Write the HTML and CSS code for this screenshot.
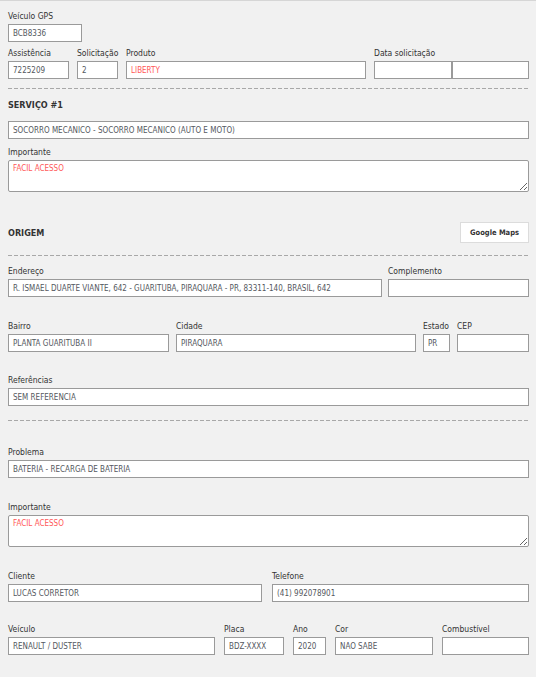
FILE: index.html
```html
<!DOCTYPE html>
<html lang="pt">
<head>
<meta charset="utf-8">
<title>Serviço</title>
<link rel="stylesheet" href="styles.css">
</head>
<body>
<div class="page">
  <div class="field gps">
    <label>Veículo GPS</label>
    <input class="inp" value="BCB8336">
  </div>

  <div class="row r-top">
    <div class="field"><label>Assistência</label><input class="inp" value="7225209"></div>
    <div class="field"><label>Solicitação</label><input class="inp" value="2"></div>
    <div class="field"><label>Produto</label><input class="inp red" value="LIBERTY"></div>
    <div class="field"><label>Data solicitação</label><div class="pair"><input class="inp"><input class="inp"></div></div>
  </div>

  <div class="dash d1"></div>

  <div class="title t-serv">SERVIÇO #1</div>
  <input class="inp serv" value="SOCORRO MECÂNICO - SOCORRO MECÂNICO (AUTO E MOTO)">
  <div class="field imp1">
    <label>Importante</label>
    <textarea class="ta red">FACIL ACESSO</textarea>
  </div>

  <div class="head-row">
    <div class="title">ORIGEM</div>
    <button class="btn" type="button">Google Maps</button>
  </div>

  <div class="dash d2"></div>

  <div class="row r-end">
    <div class="field"><label>Endereço</label><input class="inp" value="R. ISMAEL DUARTE VIANTE, 642 - GUARITUBA, PIRAQUARA - PR, 83311-140, BRASIL, 642"></div>
    <div class="field"><label>Complemento</label><input class="inp"></div>
  </div>

  <div class="row r-bairro">
    <div class="field"><label>Bairro</label><input class="inp" value="PLANTA GUARITUBA II"></div>
    <div class="field"><label>Cidade</label><input class="inp" value="PIRAQUARA"></div>
    <div class="field"><label>Estado</label><input class="inp" value="PR"></div>
    <div class="field"><label>CEP</label><input class="inp"></div>
  </div>

  <div class="field ref">
    <label>Referências</label>
    <input class="inp" value="SEM REFERENCIA">
  </div>

  <div class="dash d3"></div>

  <div class="field prob">
    <label>Problema</label>
    <input class="inp" value="BATERIA - RECARGA DE BATERIA">
  </div>

  <div class="field imp2">
    <label>Importante</label>
    <textarea class="ta red">FACIL ACESSO</textarea>
  </div>

  <div class="row r-cli">
    <div class="field"><label>Cliente</label><input class="inp" value="LUCAS CORRETOR"></div>
    <div class="field"><label>Telefone</label><input class="inp" value="(41) 992078901"></div>
  </div>

  <div class="row r-veh">
    <div class="field"><label>Veículo</label><input class="inp" value="RENAULT / DUSTER"></div>
    <div class="field"><label>Placa</label><input class="inp" value="BDZ-XXXX"></div>
    <div class="field"><label>Ano</label><input class="inp" value="2020"></div>
    <div class="field"><label>Cor</label><input class="inp" value="NÃO SABE"></div>
    <div class="field"><label>Combustível</label><input class="inp"></div>
  </div>
</div>
</body>
</html>
```

FILE: styles.css
```css
* { box-sizing: border-box; }

html, body {
  margin: 0;
  padding: 0;
}

body {
  background: #f1f1f1;
  font-family: "DejaVu Sans Condensed", "DejaVu Sans", sans-serif;
  font-stretch: condensed;
  color: #333;
}

.page {
  width: 536px;
  border-top: 1px solid #d6d6d6;
  padding: 9px 7px 0 8px;
}

.field label {
  display: block;
  height: 12px;
  line-height: 12px;
  font-size: 8.5px;
  margin-bottom: 2px;
  white-space: nowrap;
  color: #333;
}

.inp {
  display: block;
  width: 100%;
  height: 18px;
  margin: 0;
  padding: 0 4px;
  border: 1px solid #9a9a9a;
  border-radius: 0;
  background: #fff;
  font-family: "DejaVu Sans Condensed", "DejaVu Sans", sans-serif;
  font-stretch: condensed;
  font-size: 8px;
  color: #545860;
  outline: none;
}

.red { color: #ff5858; }

.ta {
  display: block;
  width: 100%;
  height: 32px;
  margin: 0;
  padding: 3px 4px;
  border: 1px solid #9a9a9a;
  border-radius: 2px;
  background: #fff;
  font-family: "DejaVu Sans Condensed", "DejaVu Sans", sans-serif;
  font-stretch: condensed;
  font-size: 8px;
  line-height: 10px;
  outline: none;
}

.gps { width: 74px; }

.row { display: grid; }

.r-top {
  margin-top: 5px;
  grid-template-columns: 61px 41px 240px 155px;
  column-gap: 8px;
}

.pair { display: flex; }
.pair .inp { flex: 1 1 0; width: auto; min-width: 0; }

.dash {
  height: 1px;
  background: repeating-linear-gradient(to right, #a8a8a8 0 4px, transparent 4px 6px);
}

.d1 { margin-top: 9px; }

.title {
  font-weight: bold;
  font-size: 9px;
  line-height: 14px;
  color: #333;
}

.t-serv { margin-top: 9px; }

.serv { margin-top: 9px; }

.imp1 { margin-top: 7px; }

.head-row {
  margin-top: 30px;
  display: flex;
  align-items: center;
  justify-content: space-between;
}

.btn {
  width: 69px;
  height: 21px;
  margin: 0;
  padding: 0;
  border: 1px solid #dcdcdc;
  background: #fff;
  font-family: "DejaVu Sans Condensed", "DejaVu Sans", sans-serif;
  font-stretch: condensed;
  font-weight: bold;
  font-size: 7.5px;
  color: #333;
}

.d2 { margin-top: 12px; }

.r-end {
  margin-top: 9px;
  grid-template-columns: 374px 141px;
  column-gap: 6px;
}

.r-bairro {
  margin-top: 23px;
  grid-template-columns: 161px 240px 27px 72px;
  column-gap: 7px;
}

.ref { margin-top: 22px; }

.d3 { margin-top: 14px; }

.prob { margin-top: 25px; }

.imp2 { margin-top: 23px; }

.r-cli {
  margin-top: 23px;
  grid-template-columns: 254px 257px;
  column-gap: 10px;
}

.r-veh {
  margin-top: 21px;
  grid-template-columns: 207px 60px 33px 98px 87px;
  column-gap: 9px;
}
```
